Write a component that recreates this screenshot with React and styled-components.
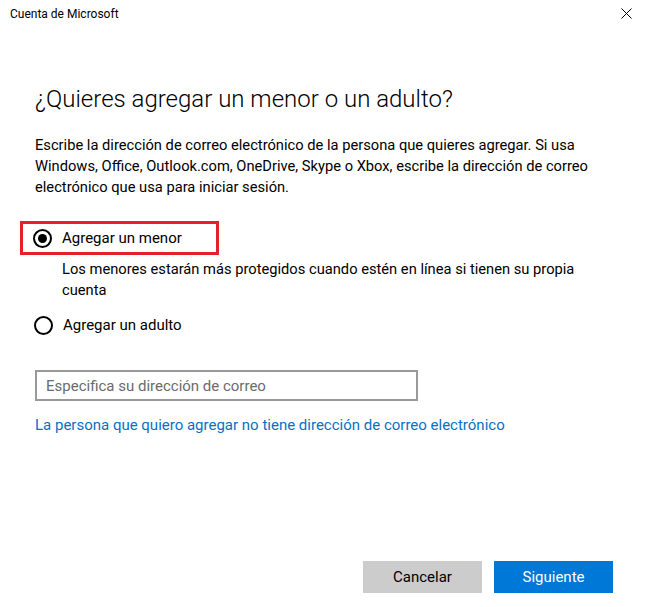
import React, { useState } from 'react';
import styled, { createGlobalStyle } from 'styled-components';

const GlobalStyle = createGlobalStyle`
    html, body {
        margin: 0;
        padding: 0;
        background: #ffffff;
    }
    body {
        font-family: Roboto, "Liberation Sans", sans-serif;
        color: #000000;
    }
`;

const Window = styled.div`
    display: flex;
    flex-direction: column;
    height: 100vh;
    box-sizing: border-box;
    background: #ffffff;
`;

const TitleBar = styled.div`
    display: flex;
    justify-content: space-between;
    align-items: center;
    height: 27px;
    padding: 0 7px 0 10px;
    font-size: 12px;
    color: #000000;
`;

const CloseBtn = styled.button`
    display: flex;
    align-items: center;
    justify-content: center;
    width: 24px;
    height: 24px;
    padding: 0;
    border: none;
    background: transparent;
    cursor: pointer;
`;

const Content = styled.div`
    display: flex;
    flex-direction: column;
    align-items: flex-start;
    padding: 0 35px;
`;

const Heading = styled.h1`
    margin: 56px 0 0;
    font-size: 24px;
    line-height: 32px;
    font-weight: 300;
    color: #000000;
`;

const Text = styled.p`
    margin: ${(props) => props.margin || '0'};
    font-size: 14.7px;
    line-height: 21px;
    color: #000000;
`;

const Highlight = styled.div`
    display: flex;
    align-items: center;
    width: 199px;
    height: 34px;
    box-sizing: border-box;
    margin: 23px 0 0 -15px;
    padding-left: 11px;
    border: 3px solid #e3202b;
`;

const Option = styled.label`
    display: flex;
    align-items: center;
    gap: 10px;
    height: 28px;
    margin-top: ${(props) => props.offset || '0'};
    font-size: 15px;
    cursor: pointer;
`;

const Radio = styled.input.attrs({ type: 'radio' })`
    appearance: none;
    margin: 0 0 0 -1px;
    width: 19px;
    height: 19px;
    border: 2px solid #000000;
    border-radius: 50%;
    box-sizing: border-box;
    display: grid;
    place-items: center;
    cursor: pointer;
    &::before {
        content: '';
        width: 9px;
        height: 9px;
        border-radius: 50%;
        background: #000000;
        transform: scale(${(props) => (props.checked ? 1 : 0)});
    }
`;

const Hint = styled(Text)`
    padding-left: 27px;
    max-width: 530px;
`;

const EmailInput = styled.input`
    margin-top: 31px;
    width: 383px;
    height: 31px;
    box-sizing: border-box;
    padding: 0 9px;
    border: 2px solid #999999;
    font-family: inherit;
    font-size: 15px;
    color: #000000;
    outline: none;
    &::placeholder {
        color: #6b6b6b;
    }
`;

const Link = styled.a`
    margin-top: 14px;
    font-size: 15px;
    line-height: 21px;
    color: #0a6fc2;
    text-decoration: none;
    cursor: pointer;
`;

const Footer = styled.div`
    display: flex;
    justify-content: flex-end;
    gap: 12px;
    margin-top: auto;
    padding: 0 32px 14px 0;
`;

const Button = styled.button`
    width: 119px;
    height: 32px;
    border: none;
    font-family: inherit;
    font-size: 15px;
    color: ${(props) => (props.primary ? '#ffffff' : '#000000')};
    background: ${(props) => (props.primary ? '#0078d7' : '#cccccc')};
    cursor: pointer;
`;

function CloseIcon() {
    return (
        <svg width='11' height='11' viewBox='0 0 11 11'>
            <path d='M0.5 0.5 L10.5 10.5 M10.5 0.5 L0.5 10.5' stroke='#000' strokeWidth='1' />
        </svg>
    );
}

function App() {
    const [choice, setChoice] = useState('menor');
    return (
        <Window>
            <GlobalStyle />
            <TitleBar>
                <span>Cuenta de Microsoft</span>
                <CloseBtn type='button' aria-label='Cerrar'>
                    <CloseIcon />
                </CloseBtn>
            </TitleBar>
            <Content>
                <Heading>¿Quieres agregar un menor o un adulto?</Heading>
                <Text margin='20px 0 0'>
                    Escribe la dirección de correo electrónico de la persona que quieres agregar. Si usa
                    Windows, Office, Outlook.com, OneDrive, Skype o Xbox, escribe la dirección de correo
                    electrónico que usa para iniciar sesión.
                </Text>
                <Highlight>
                    <Option>
                        <Radio
                            name='tipo'
                            checked={choice === 'menor'}
                            onChange={() => setChoice('menor')}
                        />
                        Agregar un menor
                    </Option>
                </Highlight>
                <Hint margin='4px 0 0'>
                    Los menores estarán más protegidos cuando estén en línea si tienen su propia cuenta
                </Hint>
                <Option offset='10px'>
                    <Radio
                        name='tipo'
                        checked={choice === 'adulto'}
                        onChange={() => setChoice('adulto')}
                    />
                    Agregar un adulto
                </Option>
                <EmailInput placeholder='Especifica su dirección de correo' />
                <Link>La persona que quiero agregar no tiene dirección de correo electrónico</Link>
            </Content>
            <Footer>
                <Button type='button'>Cancelar</Button>
                <Button type='button' primary>
                    Siguiente
                </Button>
            </Footer>
        </Window>
    );
}

export default App;
